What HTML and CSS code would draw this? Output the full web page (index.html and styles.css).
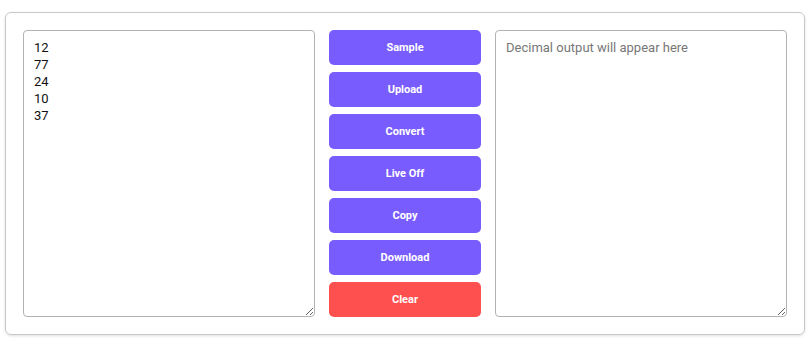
FILE: index.html
```html
<!DOCTYPE html>
<html>
<head>
<meta charset="utf-8">
<link rel="stylesheet" href="styles.css">
</head>
<body>
<div class="page">
  <div class="card">
    <textarea class="field">12
77
24
10
37</textarea>
    <div class="actions">
      <button class="btn">Sample</button>
      <button class="btn">Upload</button>
      <button class="btn">Convert</button>
      <button class="btn">Live Off</button>
      <button class="btn">Copy</button>
      <button class="btn">Download</button>
      <button class="btn btn-danger">Clear</button>
    </div>
    <textarea class="field" placeholder="Decimal output will appear here"></textarea>
  </div>
</div>
</body>
</html>
```
FILE: styles.css
```css
html, body {
  margin: 0;
  padding: 0;
  background: #fff;
  font-family: Roboto, "Liberation Sans", sans-serif;
}
.page {
  padding: 12px 5px;
}
.card {
  box-sizing: border-box;
  width: 800px;
  border: 1px solid #c8c8c8;
  border-radius: 6px;
  box-shadow: 0 1px 3px rgba(0,0,0,0.12);
  padding: 17px;
  display: flex;
  gap: 14px;
}
.field {
  box-sizing: border-box;
  width: 292px;
  height: 287px;
  margin: 0;
  border: 1px solid #b3b3b3;
  border-radius: 4px;
  padding: 8px 10px;
  font-family: Roboto, "Liberation Sans", sans-serif;
  font-size: 13px;
  line-height: 17px;
  color: #111;
  resize: both;
  outline: none;
}
.field::placeholder {
  color: #777;
}
.actions {
  width: 152px;
  display: flex;
  flex-direction: column;
  gap: 7px;
}
.btn {
  height: 35px;
  border: none;
  border-radius: 5px;
  background: #785cfd;
  color: #fff;
  font-family: Roboto, "Liberation Sans", sans-serif;
  font-weight: 700;
  font-size: 11px;
  padding: 0;
  cursor: pointer;
}
.btn-danger {
  background: #ff5050;
}
```
